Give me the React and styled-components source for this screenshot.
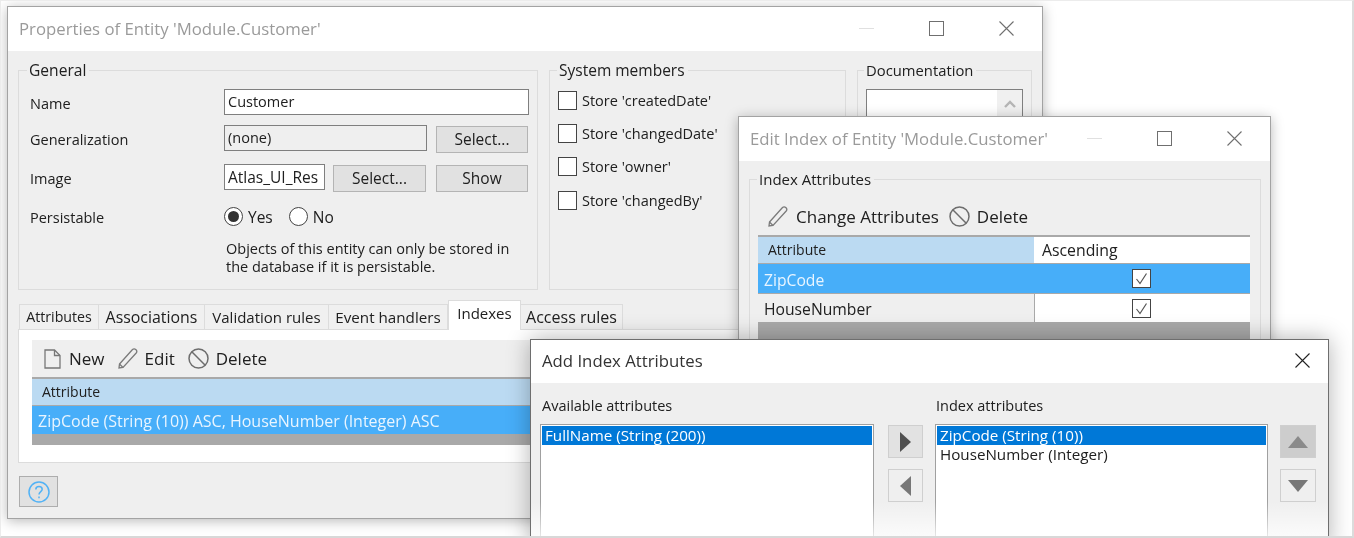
import React from "react";
import styled, { createGlobalStyle } from "styled-components";

const GlobalStyle = createGlobalStyle`
  html, body { margin: 0; padding: 0; background: #fff; }
  * { box-sizing: border-box; }
`;

const Stage = styled.div`
  position: relative;
  width: 1354px;
  height: 538px;
  overflow: hidden;
  background: #fff;
  border: 1px solid #ececec;
  border-right: 2px solid #dcdcdc;
  border-bottom: 2px solid #d8d8d8;
  font-family: "Open Sans", "Noto Sans", sans-serif;
  font-size: 14.5px;
  color: #202020;
  filter: blur(0.35px);
`;

const Window = styled.div`
  position: absolute;
  left: ${(p) => p.$x}px;
  top: ${(p) => p.$y}px;
  width: ${(p) => p.$w}px;
  height: ${(p) => p.$h}px;
  background: #efefef;
  border: 1px solid ${(p) => p.$edge || "#a3a3a3"};
  box-shadow: ${(p) => (p.$front ? "0 0 22px rgba(0, 0, 0, 0.3)" : "0 2px 12px rgba(0, 0, 0, 0.28)")};
  overflow: hidden;
`;

const TitleBar = styled.div`
  height: ${(p) => p.$h || 44}px;
  background: #fff;
  display: flex;
  align-items: center;
  justify-content: space-between;
  padding: 0 ${(p) => p.$padR || 28}px 2px 11px;
`;

const Title = styled.div`
  font-size: 16.75px;
  color: ${(p) => (p.$active ? "#333" : "#9a9a9a")};
`;

const Controls = styled.div`
  display: flex;
  align-items: center;
  gap: 55px;
`;

const Row = styled.div`
  display: flex;
  gap: 11px;
  padding: 9px 10px 0;
`;

const Group = styled.fieldset`
  margin: 0;
  min-width: 0;
  width: ${(p) => p.$w}px;
  height: ${(p) => p.$h}px;
  border: 1px solid #dcdcdc;
  padding: ${(p) => p.$pad || "9px 8px 0"};
  flex-shrink: 0;
`;

const Legend = styled.legend`
  height: 20px;
  line-height: 20px;
  padding: 0 3px 0 2px;
  margin-left: ${(p) => p.$ml}px;
  font-size: ${(p) => p.$size || 15}px;
  color: #202020;
`;

const Form = styled.div`
  display: grid;
  grid-template-columns: 194px 1fr;
  grid-template-rows: 26px 29px 33px 23px auto;
  row-gap: 10px;
  align-items: start;
`;

const Label = styled.div`
  line-height: ${(p) => p.$lh || 30}px;
`;

const Controlset = styled.div`
  display: flex;
  align-items: flex-start;
  gap: ${(p) => p.$gap || 9}px;
`;

const TextBox = styled.div`
  width: ${(p) => p.$w}px;
  height: 26px;
  line-height: 24px;
  padding-left: 3px;
  font-size: ${(p) => p.$size || 14.5}px;
  background: ${(p) => (p.$off ? "#efefef" : "#fff")};
  border: 1px solid #7f7f7f;
  overflow: hidden;
  white-space: nowrap;
`;

const PushButton = styled.div`
  width: ${(p) => p.$w || 92}px;
  height: 27px;
  line-height: 25px;
  margin-top: 1px;
  margin-left: ${(p) => p.$ml || 0}px;
  text-align: center;
  font-size: 15.5px;
  background: #e1e1e1;
  border: 1px solid #b4b4b4;
`;

const RadioRow = styled.div`
  display: flex;
  align-items: center;
  height: 19px;
  font-size: 15.5px;
`;

const Radio = styled.span`
  width: 19px;
  height: 19px;
  border-radius: 50%;
  border: 1px solid #444;
  background: #fff;
  display: grid;
  place-items: center;
  margin-right: 5px;
  flex-shrink: 0;
  &::after {
    content: "";
    width: 11px;
    height: 11px;
    border-radius: 50%;
    background: ${(p) => (p.$on ? "#333" : "transparent")};
  }
`;

const RadioText = styled.span`
  margin-right: ${(p) => p.$mr || 0}px;
`;

const Note = styled.div`
  grid-column: 2;
  padding-left: 2px;
  line-height: 18px;
`;

const CheckList = styled.div`
  display: flex;
  flex-direction: column;
  gap: 15px;
  padding-top: 2px;
`;

const CheckRow = styled.div`
  display: flex;
  align-items: center;
  gap: 5px;
  height: 18.4px;
  white-space: nowrap;
`;

const CheckBox = styled.span`
  width: 19px;
  height: 19px;
  border: 1px solid #444;
  background: #fff;
  flex-shrink: 0;
  display: grid;
  place-items: center;
`;

const DocBox = styled.div`
  height: 190px;
  background: #fff;
  border: 1px solid #7f7f7f;
  display: flex;
  justify-content: flex-end;
`;

const ScrollTrack = styled.div`
  width: 25px;
  background: #f0f0f0;
  display: flex;
  justify-content: center;
  padding-top: 10px;
`;

const TabStrip = styled.div`
  display: flex;
  align-items: flex-end;
  height: 28px;
  margin: 11px 10px 0;
  padding-left: 1px;
`;

const Tab = styled.div`
  width: ${(p) => p.$w}px;
  height: ${(p) => (p.$active ? 30 : 25)}px;
  line-height: ${(p) => (p.$active ? 25 : 24)}px;
  font-size: ${(p) => p.$size}px;
  text-align: center;
  white-space: nowrap;
  background: ${(p) => (p.$active ? "#fff" : "#f0f0f0")};
  border: 1px solid #dcdcdc;
  border-bottom: 0;
  border-left-width: ${(p) => (p.$first || p.$active ? 1 : 0)}px;
  position: relative;
  z-index: ${(p) => (p.$active ? 1 : 0)};
  margin-bottom: ${(p) => (p.$active ? -1 : 0)}px;
`;

const TabPanel = styled.div`
  height: 134px;
  margin: 0 10px;
  padding: 10px 13px 0;
  background: #fff;
  border: 1px solid #dcdcdc;
`;

const Toolbar = styled.div`
  height: 37px;
  background: #efefef;
  display: flex;
  align-items: center;
  gap: ${(p) => p.$gap || 13}px;
  padding-left: ${(p) => p.$pad || 12}px;
  font-size: 17px;
`;

const ToolItem = styled.div`
  display: flex;
  align-items: center;
  gap: ${(p) => p.$gap || 8}px;
  white-space: nowrap;
`;

const Grid = styled.div`
  border-top: 2px solid #a9a9a9;
  background: #a9a9a9;
  display: grid;
  grid-template-columns: ${(p) => p.$cols};
  grid-auto-rows: auto;
  row-gap: 1px;
  padding-bottom: ${(p) => p.$tail}px;
  font-size: ${(p) => p.$size}px;
`;

const HeadCell = styled.div`
  background: ${(p) => (p.$sorted ? "#bbdaf2" : "#fff")};
  font-size: ${(p) => (p.$sorted ? 14 : 15.8)}px;
  line-height: 26px;
  padding-left: ${(p) => p.$pad || 10}px;
`;

const Cell = styled.div`
  height: ${(p) => p.$h}px;
  background: ${(p) => (p.$sel ? "#47aef9" : p.$plain ? "#fff" : "#efefef")};
  color: ${(p) => (p.$sel ? "#e9f5ff" : "inherit")};
  border-left: ${(p) => (p.$plain ? "1px solid #a9a9a9" : "0")};
  display: flex;
  align-items: center;
  justify-content: ${(p) => (p.$center ? "center" : "flex-start")};
  padding: ${(p) => (p.$center ? "0 2px 0 0" : "2px 0 0 6px")};
  white-space: nowrap;
`;

const HelpButton = styled.div`
  width: 39px;
  height: 31px;
  margin: 13px 0 0 11px;
  background: #e1e1e1;
  border: 1px solid #adadad;
  display: grid;
  place-items: center;
`;

const EditBody = styled.div`
  padding: 8px 9px 0 10px;
`;

const Columns = styled.div`
  display: grid;
  grid-template-columns: 334px 35px 333px 36px;
  column-gap: 13px;
  grid-template-rows: 20px auto;
  row-gap: 8px;
  padding: 13px 0 0 9px;
`;

const ColumnLabel = styled.div`
  grid-row: 1;
  grid-column: ${(p) => p.$col};
  line-height: 20px;
  padding-left: ${(p) => (p.$col === 1 ? 2 : 1)}px;
`;

const ListBox = styled.div`
  grid-row: 2;
  height: 140px;
  padding: 1px;
  background: #fff;
  border: 1px solid #a0a0a0;
`;

const ListItem = styled.div`
  height: 19px;
  line-height: 19px;
  padding-left: 3px;
  font-size: 15.2px;
  background: ${(p) => (p.$sel ? "#0078d7" : "transparent")};
  color: ${(p) => (p.$sel ? "#fff" : "inherit")};
  white-space: nowrap;
`;

const ArrowStack = styled.div`
  grid-row: 2;
  display: flex;
  flex-direction: column;
  gap: 11px;
  padding-top: 1px;
  margin-left: ${(p) => p.$ml}px;
  margin-right: ${(p) => -p.$ml}px;
`;

const ArrowButton = styled.div`
  height: 33px;
  background: ${(p) => p.$bg || "#e2e2e2"};
  border: 1px solid #cfcfcf;
  display: grid;
  place-items: center;
`;

const BottomFade = styled.div`
  position: absolute;
  left: 0;
  right: 0;
  bottom: 0;
  height: 46px;
  background: linear-gradient(rgba(255, 255, 255, 0), #fff);
`;

const MinIcon = () => (
  <svg width="15" height="15" viewBox="0 0 15 15">
    <path d="M0 7.5H15" stroke="#e0e0e0" strokeWidth="1" />
  </svg>
);

const MaxIcon = () => (
  <svg width="15" height="15" viewBox="0 0 15 15">
    <rect x="0.5" y="0.5" width="14" height="14" fill="none" stroke="#6f6f6f" />
  </svg>
);

const CloseIcon = ({ color = "#6f6f6f" }) => (
  <svg width="15" height="15" viewBox="0 0 15 15">
    <path d="M0.5 0.5L14.5 14.5M14.5 0.5L0.5 14.5" stroke={color} strokeWidth="1.1" />
  </svg>
);

const FileIcon = () => (
  <svg width="17" height="20" viewBox="0 0 17 20" fill="none" stroke="#777" strokeWidth="1.3">
    <path d="M1 1H10.5L16 6.5V19H1Z" />
    <path d="M10.5 1V6.5H16" />
  </svg>
);

const PencilIcon = () => (
  <svg width="20" height="21" viewBox="0 0 20 21" fill="none" stroke="#7a7a7a" strokeWidth="1.3">
    <path d="M1.5 16L14.5 1.5C15.5 0.6 17 0.8 18 1.8C19 2.8 19 4 18.2 5L5 19.5L1 20Z" />
    <path d="M1.5 16L5 19.5" />
  </svg>
);

const BanIcon = () => (
  <svg width="21" height="21" viewBox="0 0 21 21" fill="none" stroke="#6d6d6d" strokeWidth="1.5">
    <circle cx="10.5" cy="10.5" r="9.5" />
    <path d="M3.8 3.8L17.2 17.2" />
  </svg>
);

const HelpIcon = () => (
  <svg width="22" height="22" viewBox="0 0 22 22" fill="none" stroke="#52b2f5" strokeWidth="1.5">
    <circle cx="11" cy="11" r="10" />
    <path d="M7.8 8.5C7.8 6.6 9.3 5.5 11 5.5C12.8 5.5 14.2 6.7 14.2 8.3C14.2 10.6 11 10.8 11 13.6" />
    <path d="M11 15.6V17.2" />
  </svg>
);

const Tick = () => (
  <svg width="13" height="13" viewBox="0 0 13 13" fill="none" stroke="#555" strokeWidth="1.2">
    <path d="M1.5 7L5 11.5L11.5 1.5" />
  </svg>
);

const Triangle = ({ dir, color }) => {
  const shapes = {
    right: { w: 11, h: 20, d: "M0 0L11 10L0 20Z" },
    left: { w: 11, h: 20, d: "M11 0L0 10L11 20Z" },
    up: { w: 20, h: 12, d: "M10 0L20 12H0Z" },
    down: { w: 20, h: 12, d: "M0 0H20L10 12Z" },
  };
  const s = shapes[dir];
  return (
    <svg width={s.w} height={s.h} viewBox={`0 0 ${s.w} ${s.h}`}>
      <path d={s.d} fill={color} />
    </svg>
  );
};

const tabs = [
  ["Attributes", 80, 14.2],
  ["Associations", 106, 15.9],
  ["Validation rules", 124, 15],
  ["Event handlers", 119, 15.2],
  ["Indexes", 73, 15],
  ["Access rules", 102, 16],
];

const members = ["Store 'createdDate'", "Store 'changedDate'", "Store 'owner'", "Store 'changedBy'"];

const App = () => {
  return (
    <Stage>
      <GlobalStyle />

      <Window $x={6} $y={5} $w={1036} $h={513}>
        <TitleBar>
          <Title>Properties of Entity 'Module.Customer'</Title>
          <Controls>
            <MinIcon />
            <MaxIcon />
            <CloseIcon />
          </Controls>
        </TitleBar>
        <Row>
          <Group $w={520} $h={230} $pad="9px 8px 0 11px">
            <Legend $ml={-3} $size={15.6}>General</Legend>
            <Form>
              <Label>Name</Label>
              <Controlset>
                <TextBox $w={305}>Customer</TextBox>
              </Controlset>
              <Label>Generalization</Label>
              <Controlset>
                <TextBox $w={203} $off>(none)</TextBox>
                <PushButton>Select...</PushButton>
              </Controlset>
              <Label>Image</Label>
              <Controlset $gap={8}>
                <TextBox $w={101} $size={15.5}>Atlas_UI_Res</TextBox>
                <PushButton $w={93}>Select...</PushButton>
                <PushButton $ml={2}>Show</PushButton>
              </Controlset>
              <Label $lh={22}>Persistable</Label>
              <RadioRow>
                <Radio $on />
                <RadioText $mr={16}>Yes</RadioText>
                <Radio />
                <RadioText>No</RadioText>
              </RadioRow>
              <Note>
                Objects of this entity can only be stored in
                <br />
                the database if it is persistable.
              </Note>
            </Form>
          </Group>
          <Group $w={297} $h={230}>
            <Legend $ml={-1} $size={15.5}>System members</Legend>
            <CheckList>
              {members.map((m) => (
                <CheckRow key={m}>
                  <CheckBox />
                  {m}
                </CheckRow>
              ))}
            </CheckList>
          </Group>
          <Group $w={175} $h={230}>
            <Legend $ml={-2} $size={14.8}>Documentation</Legend>
            <DocBox>
              <ScrollTrack>
                <svg width="12" height="8" viewBox="0 0 12 8" fill="none" stroke="#b5b5b5" strokeWidth="2.4">
                  <path d="M1 7L6 2L11 7" />
                </svg>
              </ScrollTrack>
            </DocBox>
          </Group>
        </Row>

        <TabStrip>
          {tabs.map(([name, w, size], i) => (
            <Tab key={name} $w={w} $size={size} $first={i === 0} $active={name === "Indexes"}>
              {name}
            </Tab>
          ))}
        </TabStrip>
        <TabPanel>
          <Toolbar>
            <ToolItem>
              <FileIcon />
              New
            </ToolItem>
            <ToolItem $gap={7}>
              <PencilIcon />
              Edit
            </ToolItem>
            <ToolItem $gap={7}>
              <BanIcon />
              Delete
            </ToolItem>
          </Toolbar>
          <Grid $cols="1fr" $tail={11} $size={16}>
            <HeadCell $sorted>Attribute</HeadCell>
            <Cell $sel $h={28}>ZipCode (String (10)) ASC, HouseNumber (Integer) ASC</Cell>
          </Grid>
        </TabPanel>
        <HelpButton>
          <HelpIcon />
        </HelpButton>
      </Window>

      <Window $x={737} $y={115} $w={533} $h={300}>
        <TitleBar>
          <Title>Edit Index of Entity 'Module.Customer'</Title>
          <Controls>
            <MinIcon />
            <MaxIcon />
            <CloseIcon />
          </Controls>
        </TitleBar>
        <EditBody>
          <Group $w={512} $h={200} $pad="9px 10px 0 8px">
            <Legend $ml={-1}>Index Attributes</Legend>
            <Toolbar $pad={10} $gap={10}>
              <ToolItem>
                <PencilIcon />
                Change Attributes
              </ToolItem>
              <ToolItem $gap={7}>
                <BanIcon />
                Delete
              </ToolItem>
            </Toolbar>
            <Grid $cols="276px 1fr" $tail={40} $size={15.7}>
              <HeadCell $sorted>Attribute</HeadCell>
              <HeadCell $pad={8}>Ascending</HeadCell>
              <Cell $sel $h={29}>ZipCode</Cell>
              <Cell $sel $center $h={29}>
                <CheckBox>
                  <Tick />
                </CheckBox>
              </Cell>
              <Cell $h={28}>HouseNumber</Cell>
              <Cell $plain $center $h={28}>
                <CheckBox>
                  <Tick />
                </CheckBox>
              </Cell>
            </Grid>
          </Group>
        </EditBody>
      </Window>

      <Window $x={529} $y={338} $w={799} $h={210} $edge="#6e6e6e" $front>
        <TitleBar $h={43} $padR={18}>
          <Title $active>Add Index Attributes</Title>
          <Controls>
            <CloseIcon color="#222" />
          </Controls>
        </TitleBar>
        <Columns>
          <ColumnLabel $col={1}>Available attributes</ColumnLabel>
          <ColumnLabel $col={3}>Index attributes</ColumnLabel>
          <ListBox>
            <ListItem $sel>FullName (String (200))</ListItem>
          </ListBox>
          <ArrowStack $ml={1}>
            <ArrowButton>
              <Triangle dir="right" color="#505050" />
            </ArrowButton>
            <ArrowButton $bg="#efefef">
              <Triangle dir="left" color="#777" />
            </ArrowButton>
          </ArrowStack>
          <ListBox>
            <ListItem $sel>ZipCode (String (10))</ListItem>
            <ListItem>HouseNumber (Integer)</ListItem>
          </ListBox>
          <ArrowStack $ml={-1}>
            <ArrowButton $bg="#cdcdcd">
              <Triangle dir="up" color="#8a8a8a" />
            </ArrowButton>
            <ArrowButton $bg="#efefef">
              <Triangle dir="down" color="#777" />
            </ArrowButton>
          </ArrowStack>
        </Columns>
        <BottomFade />
      </Window>
    </Stage>
  );
};

export default App;
